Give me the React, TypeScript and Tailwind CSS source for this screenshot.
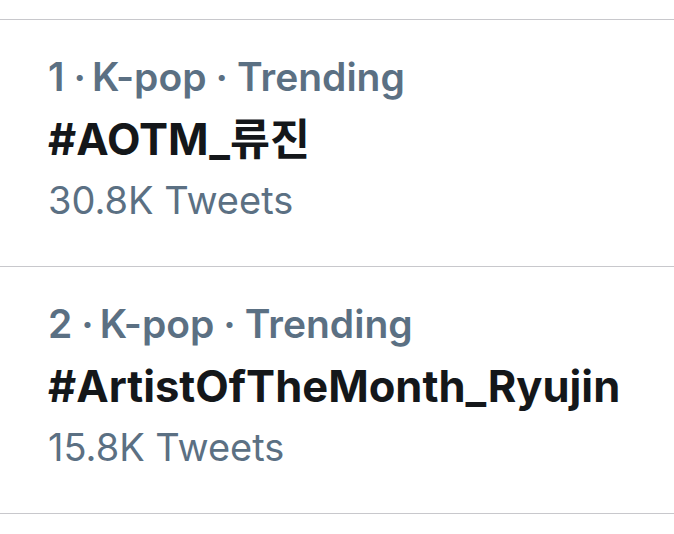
const trends = [
  { rank: 1, category: "K-pop", name: "#AOTM_류진", count: "30.8K Tweets" },
  { rank: 2, category: "K-pop", name: "#ArtistOfTheMonth_Ryujin", count: "15.8K Tweets" },
];

export default function App() {
  return (
    <div
      className="h-[534px] w-[674px] overflow-hidden bg-white pt-[19px]"
      style={{ fontFamily: '"Inter", "Noto Sans CJK KR", sans-serif' }}
    >
      <div className="border-t border-[#c8c8cc]">
        {trends.map((t) => (
          <div key={t.rank} className="h-[247px] border-b border-[#c8c8cc] pl-[48px] pt-[27px]">
            <div className="flex h-[60px] items-center whitespace-nowrap text-[39px] leading-[60px] font-semibold text-[#5b7083]">
              <span>{t.rank}</span>
              <span className="ml-[9px] mr-[6px]">·</span>
              <span>{t.category}</span>
              <span className="mx-[9px]">·</span>
              <span>Trending</span>
            </div>
            <div className="h-[64px] whitespace-nowrap text-[43.5px] leading-[64px] font-bold text-[#14171a]">
              {t.name}
            </div>
            <div className="h-[58px] whitespace-nowrap text-[38px] leading-[58px] text-[#5b7083]">{t.count}</div>
          </div>
        ))}
      </div>
    </div>
  );
}
